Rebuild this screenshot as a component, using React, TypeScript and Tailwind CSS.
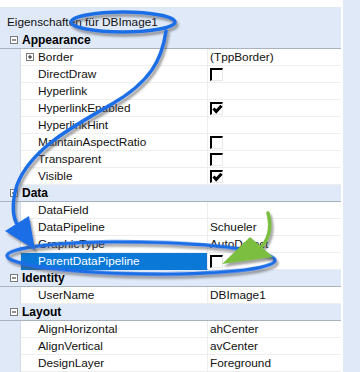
import React from "react";

type Row =
  | { kind: "cat"; label: string }
  | { kind: "prop"; name: string; value?: string; check?: "on" | "off"; plus?: boolean; selected?: boolean };

const rows: Row[] = [
  { kind: "cat", label: "Appearance" },
  { kind: "prop", name: "Border", value: "(TppBorder)", plus: true },
  { kind: "prop", name: "DirectDraw", check: "off" },
  { kind: "prop", name: "Hyperlink" },
  { kind: "prop", name: "HyperlinkEnabled", check: "on" },
  { kind: "prop", name: "HyperlinkHint" },
  { kind: "prop", name: "MaintainAspectRatio", check: "off" },
  { kind: "prop", name: "Transparent", check: "off" },
  { kind: "prop", name: "Visible", check: "on" },
  { kind: "cat", label: "Data" },
  { kind: "prop", name: "DataField" },
  { kind: "prop", name: "DataPipeline", value: "Schueler" },
  { kind: "prop", name: "GraphicType", value: "AutoDetect" },
  { kind: "prop", name: "ParentDataPipeline", check: "off", selected: true },
  { kind: "cat", label: "Identity" },
  { kind: "prop", name: "UserName", value: "DBImage1" },
  { kind: "cat", label: "Layout" },
  { kind: "prop", name: "AlignHorizontal", value: "ahCenter" },
  { kind: "prop", name: "AlignVertical", value: "avCenter" },
  { kind: "prop", name: "DesignLayer", value: "Foreground" },
];

function Box({ sign }: { sign: "+" | "-" }) {
  return (
    <svg width="8" height="8" viewBox="0 0 8 8" className="block">
      <rect x="0.5" y="0.5" width="7" height="7" fill="#fff" stroke="#7a7a7a" />
      <line x1="2" y1="4" x2="6" y2="4" stroke="#222" />
      {sign === "+" && <line x1="4" y1="2" x2="4" y2="6" stroke="#222" />}
    </svg>
  );
}

function Check({ on }: { on: boolean }) {
  return (
    <div className="w-[13px] h-[13px] border-l-2 border-t-2 border-black border-r border-b border-r-[#e8e8e8] border-b-[#e8e8e8] bg-white relative">
      {on && (
        <svg width="11" height="11" viewBox="0 0 11 11" className="absolute left-0 top-0">
          <path d="M1.5 4.5 L4.2 7.5 L9.5 1.8" fill="none" stroke="#000" strokeWidth="3" strokeLinejoin="miter" />
        </svg>
      )}
    </div>
  );
}

export default function App() {
  return (
    <div
      className="w-[360px] h-[372px] relative overflow-hidden bg-[#dfe9f8] flex text-[11.8px] text-[#111]"
      style={{ fontFamily: '"Liberation Sans", Arial, sans-serif' }}
    >
      <div className="w-[341px] flex flex-col">
        <div className="h-[32px] flex flex-col">
          <div className="h-[7px] bg-white" />
          <div className="flex-1 pl-[7px] pt-[8px] leading-[14px]">Eigenschaften für DBImage1</div>
        </div>
        {rows.map((r, i) =>
          r.kind === "cat" ? (
            <div key={i} className="h-[17px] flex items-center border-b border-[#a9b2bf] shrink-0">
              <div className="w-[10px]" />
              <Box sign="-" />
              <div className="pl-[4px] font-bold text-[12px] text-black leading-[16px]">{r.label}</div>
            </div>
          ) : (
            <div key={i} className="h-[17px] flex shrink-0">
              <div className="w-[21px] border-r border-[#d4dbe5]" />
              <div
                className={
                  "w-[187px] flex items-center border-b border-r " +
                  (r.selected ? "bg-[#0a78d7] text-white border-b-[#0a78d7] border-r-[#eaeaea]" : "bg-white border-[#eeeeee]")
                }
              >
                <div className="w-[17px] flex items-center pl-[5px]">{r.plus && <Box sign="+" />}</div>
                <span className="leading-[16px]">{r.name}</span>
              </div>
              <div className="flex-1 flex items-center bg-white border-b border-[#eeeeee] pl-[2px]">
                {r.check ? <Check on={r.check === "on"} /> : <span className="leading-[16px]">{r.value}</span>}
              </div>
            </div>
          )
        )}
      </div>
      <div className="w-[2px] bg-white" />
      <div className="flex-1" />

      <svg className="absolute left-0 top-0 pointer-events-none" width="360" height="372" viewBox="0 0 360 372">
        <defs>
          <filter id="sh" x="-20%" y="-20%" width="140%" height="140%">
            <feDropShadow dx="2" dy="3" stdDeviation="1.2" floodColor="#555" floodOpacity="0.55" />
          </filter>
        </defs>
        <g filter="url(#sh)" fill="none" stroke="#1c6ee6" strokeWidth="3.5" strokeLinecap="round">
          <ellipse cx="123" cy="22" rx="52" ry="10" />
          <path d="M166 31 C 162 60, 150 82, 112 104 C 70 128, 30 150, 17 185 C 11 205, 13 218, 18 226" />
          <ellipse cx="141" cy="258" rx="134" ry="16" transform="rotate(1 141 258)" />
        </g>
        <g filter="url(#sh)">
          <path d="M5 231 L29 216 L35 250 Z" fill="#1c6ee6" />
        </g>
        <g filter="url(#sh)">
          <path d="M268 213 C 272 228, 270 240, 258 250" fill="none" stroke="#7cbf3f" strokeWidth="3.5" strokeLinecap="round" />
          <path d="M222 264 L250 237 L273 257 Z" fill="#7cbf3f" />
        </g>
      </svg>
    </div>
  );
}
